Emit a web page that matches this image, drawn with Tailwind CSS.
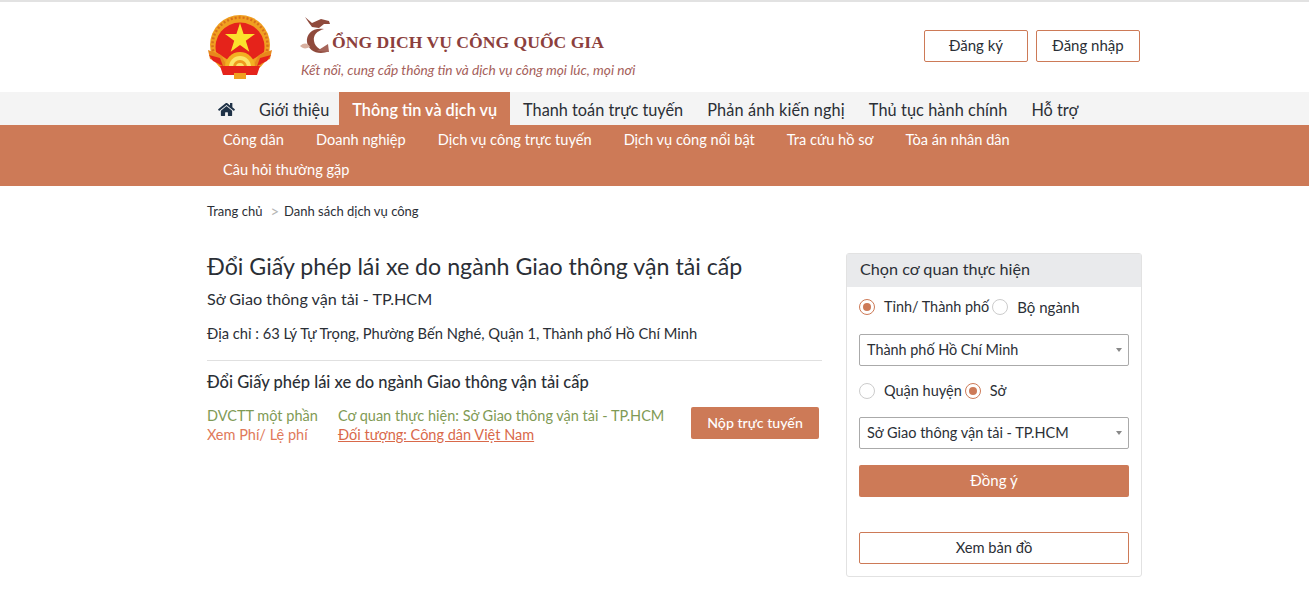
<!DOCTYPE html>
<html lang="vi">
<head>
  <meta charset="UTF-8" />
  <title>Cổng dịch vụ công quốc gia</title>
  <script src="https://cdn.jsdelivr.net/npm/@tailwindcss/browser@4"></script>
</head>
<body class="bg-white text-[#2b2f36] font-['Lato',sans-serif] overflow-hidden h-[616px]">

  <!-- Header -->
  <header class="border-t-2 border-[#e2e2e2] h-[92px]">
    <div class="w-[933px] ml-[207px] flex items-start">
      <!-- Emblem -->
      <svg class="mt-[12px] ml-[1px] w-[64px] h-[66px] shrink-0" viewBox="0 0 64 66">
        <circle cx="32" cy="31" r="30" fill="#f0a021"/>
        <circle cx="32" cy="31" r="27.500" fill="none" stroke="#d9701c" stroke-width="2.500" stroke-dasharray="2 2"/>
        <path d="M8 38 A24.500 24.500 0 1 1 56 38 L44 46 L20 46 Z" fill="#e5231b"/>
        <polygon points="32,9 35.600,20 47,20 37.800,26.800 41.300,37.800 32,31 22.700,37.800 26.200,26.800 17,20 28.400,20" fill="#fbe32c"/>
        <path d="M0 36 L13 41 L19 52 L45 52 L51 41 L64 36 L62 45 L52 49 L48 58 L16 58 L12 49 L2 45 Z" fill="#e8871c"/>
        <path d="M1 41 L12 44 L15 52 L5 47 Z M63 41 L52 44 L49 52 L59 47 Z" fill="#e5231b"/>
        <path d="M17 53 A15 15 0 0 1 47 53 Z" fill="#f3b022"/>
        <path d="M21 53 A11 11 0 0 1 43 53 Z" fill="#fce567"/>
        <path d="M25 53 A7 7 0 0 1 39 53 Z" fill="#ee9a1e"/>
        <path d="M28 53 A4 4 0 0 1 36 53 Z" fill="#fce567"/>
        <path d="M12 52 L52 52 L49 61 L15 61 Z" fill="#e5231b"/>
        <rect x="26" y="59" width="12" height="6" fill="#f0a021"/>
      </svg>
      <div class="ml-[29px] mt-[13px] w-[340px]">
        <div class="flex items-end h-[41px]">
          <!-- Dragon mark -->
          <svg class="w-[32px] h-[40px] shrink-0 -ml-[1px]" viewBox="0 0 32 40">
            <path d="M24 13 C13 11 6 18 7 26 C8 35 19 40 29 35 C22 35 15 32 14 25 C13 19 17 15 24 13 Z" fill="#8f4a3c"/>
            <path d="M5 1 L12 7 L21 3 L29 5 L30 8 L24 8 L19 12 L12 11 L9 7 Z" fill="#8f4a3c"/>
            <path d="M0 30 C4 26 8 27 10 31 C6 33 3 33 0 30 Z" fill="#d8b0a0"/>
            <path d="M17 35 L28 28 L29 36 Z" fill="#a5655a"/>
          </svg>
          <span class="font-['Liberation_Serif',serif] font-bold text-[17.600px] leading-[24px] mb-[2px] text-[#8c3f3d] whitespace-nowrap">ỔNG DỊCH VỤ CÔNG QUỐC GIA</span>
        </div>
        <p class="text-[13.700px] leading-[18px] mt-[5px] text-[#a5605a] italic whitespace-nowrap">Kết nối, cung cấp thông tin và dịch vụ công mọi lúc, mọi nơi</p>
      </div>
      <div class="ml-auto mt-[28px] flex gap-2">
        <a class="w-[104px] h-[32px] pb-[2px] flex items-center justify-center border border-[#cd7a57] rounded-[2px] text-[15px]">Đăng ký</a>
        <a class="w-[104px] h-[32px] pb-[2px] flex items-center justify-center border border-[#cd7a57] rounded-[2px] text-[15px]">Đăng nhập</a>
      </div>
    </div>
  </header>

  <!-- Main nav -->
  <nav class="bg-[#f4f4f4] h-[33px]">
    <div class="ml-[207px] flex items-stretch h-full text-[16.300px] whitespace-nowrap">
      <a class="w-[40px] flex items-center justify-center pr-[2px]">
        <svg class="w-[17px] h-[15px] mt-[1px]" viewBox="0 0 576 512" fill="#1f3247"><path d="M280 148 96 300v164c0 9 7 16 16 16l112-.3c9 0 16-7 16-16V368c0-9 7-16 16-16h64c9 0 16 7 16 16v95.600c0 9 7 16 16 16l112 .4c9 0 16-7 16-16V300L296 148c-5-4-11-4-16 0zM571 251l-83-69V44c0-7-5-12-12-12h-56c-7 0-12 5-12 12v73l-90-74c-18-15-43-15-61 0L5 251c-5 4-6 12-2 17l26 31c4 5 12 6 17 2L280 107c5-4 11-4 16 0l234 194c5 4 13 3 17-2l26-31c4-5 3-13-2-17z"/></svg>
      </a>
      <a class="pl-[12px] pr-[10px] pt-[4px] flex items-center">Giới thiệu</a>
      <a class="px-[13px] pt-[4px] flex items-center bg-[#cd7a57] text-white font-semibold">Thông tin và dịch vụ</a>
      <a class="pl-[13px] pr-[12px] pt-[4px] flex items-center">Thanh toán trực tuyến</a>
      <a class="px-[12px] pt-[4px] flex items-center tracking-[0.140px]">Phản ánh kiến nghị</a>
      <a class="px-[12px] pt-[4px] flex items-center tracking-[0.080px]">Thủ tục hành chính</a>
      <a class="px-[12px] pt-[4px] flex items-center">Hỗ trợ</a>
    </div>
  </nav>

  <!-- Sub nav -->
  <div class="bg-[#cd7a57] h-[61px] flex items-start">
    <div class="ml-[207px] w-[900px] flex flex-wrap text-white text-[14.600px] leading-[30px]">
      <a class="px-[16px]">Công dân</a>
      <a class="px-[16px]">Doanh nghiệp</a>
      <a class="px-[16px]">Dịch vụ công trực tuyến</a>
      <a class="px-[16px]">Dịch vụ công nổi bật</a>
      <a class="px-[16px]">Tra cứu hồ sơ</a>
      <a class="px-[16px]">Tòa án nhân dân</a>
      <a class="px-[16px]">Câu hỏi thường gặp</a>
    </div>
  </div>

  <!-- Breadcrumb -->
  <div class="ml-[207px] mt-[16px] text-[13px] leading-[18px] flex">
    <span>Trang chủ</span>
    <span class="ml-[8px] mr-[5px] text-[15px] text-[#b5b5b5]">&gt;</span>
    <span>Danh sách dịch vụ công</span>
  </div>

  <main class="ml-[207px] mt-[33px] flex items-start">
    <!-- Service details -->
    <section class="w-[615px]">
      <h1 class="text-[23.200px] leading-[30px] -mt-[2px]">Đổi Giấy phép lái xe do ngành Giao thông vận tải cấp</h1>
      <p class="text-[16.200px] leading-[22px] mt-[7px]">Sở Giao thông vận tải - TP.HCM</p>
      <p class="text-[14.700px] leading-[22px] mt-[12px]">Địa chỉ : 63 Lý Tự Trọng, Phường Bến Nghé, Quận 1, Thành phố Hồ Chí Minh</p>
      <div class="border-t border-[#e0e0e0] mt-[16px] pt-[10px]">
        <h2 class="text-[16.500px] leading-[22px] font-medium">Đổi Giấy phép lái xe do ngành Giao thông vận tải cấp</h2>
        <div class="flex mt-[13px] text-[14.500px] leading-[19px]">
          <div class="w-[131px]">
            <p class="text-[#7f9a55]">DVCTT một phần</p>
            <p class="text-[#e0795a]">Xem Phí/ Lệ phí</p>
          </div>
          <div class="w-[353px]">
            <p class="text-[#7f9a55]">Cơ quan thực hiện: Sở Giao thông vận tải - TP.HCM</p>
            <p class="text-[#d9694a] underline">Đối tượng: Công dân Việt Nam</p>
          </div>
          <a class="w-[128px] h-[32px] mt-[1px] pb-[2px] flex items-center justify-center bg-[#cd7a57] text-white text-[14.200px] font-medium rounded-[2px]">Nộp trực tuyến</a>
        </div>
      </div>
    </section>

    <!-- Agency picker -->
    <aside class="ml-[24px] w-[296px] h-[324px] border border-[#e2e2e2] rounded-[3px]">
      <div class="h-[33px] pb-[2px] bg-[#e9eaec] px-[13px] flex items-center text-[16.200px]">Chọn cơ quan thực hiện</div>
      <div class="px-[12px]">
        <div class="flex items-center h-[22px] mt-[9px] text-[14.400px]">
          <span class="w-[16px] h-[16px] rounded-full border border-[#cd7a57] flex items-center justify-center"><span class="w-[8px] h-[8px] rounded-full bg-[#cd7a57]"></span></span>
          <span class="ml-[9px]">Tỉnh/ Thành phố</span>
          <span class="ml-[3px] w-[16px] h-[16px] rounded-full border border-[#cccccc]"></span>
          <span class="ml-[9px] text-[15px]">Bộ ngành</span>
        </div>
        <div class="mt-[16px] h-[32px] border border-[#aaaaaa] rounded-[2px] pl-[7px] pr-[6px] flex items-center justify-between text-[14.400px]">
          <span>Thành phố Hồ Chí Minh</span>
          <span class="w-0 h-0 border-x-[3px] border-x-transparent border-t-[4px] border-t-[#888888]"></span>
        </div>
        <div class="flex items-center h-[22px] mt-[14px] text-[14.500px]">
          <span class="w-[16px] h-[16px] rounded-full border border-[#cccccc]"></span>
          <span class="ml-[9px]">Quận huyện</span>
          <span class="ml-[3px] w-[16px] h-[16px] rounded-full border border-[#cd7a57] flex items-center justify-center"><span class="w-[8px] h-[8px] rounded-full bg-[#cd7a57]"></span></span>
          <span class="ml-[9px]">Sở</span>
        </div>
        <div class="mt-[15px] h-[32px] border border-[#aaaaaa] rounded-[2px] pl-[7px] pr-[6px] flex items-center justify-between text-[14.500px]">
          <span>Sở Giao thông vận tải - TP.HCM</span>
          <span class="w-0 h-0 border-x-[3px] border-x-transparent border-t-[4px] border-t-[#888888]"></span>
        </div>
        <a class="mt-[16px] h-[32px] pb-[2px] bg-[#cd7a57] text-white rounded-[2px] flex items-center justify-center text-[15px]">Đồng ý</a>
        <a class="mt-[35px] h-[32px] pb-[2px] border border-[#cd7a57] rounded-[2px] flex items-center justify-center text-[14.700px]">Xem bản đồ</a>
      </div>
    </aside>
  </main>
</body>
</html>
